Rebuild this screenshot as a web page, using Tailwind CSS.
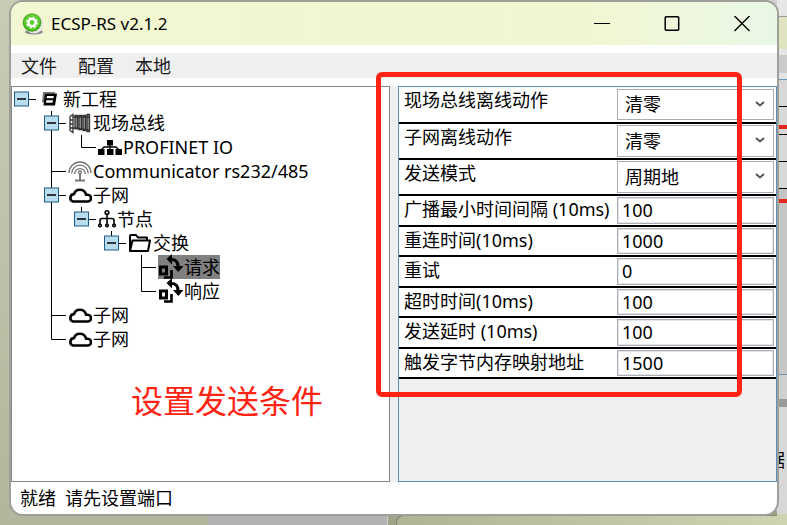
<!DOCTYPE html>
<html lang="zh-CN">
<head>
    <meta charset="utf-8">
    <meta name="viewport" content="width=device-width, initial-scale=1">
    <title>ECSP-RS v2.1.2</title>
    <script src="https://cdn.jsdelivr.net/npm/@tailwindcss/browser@4"></script>
</head>
<body class="font-['Noto_Sans','Noto_Sans_CJK_SC',sans-serif] text-black">

<!-- Shared symbols -->
<svg class="hidden" xmlns="http://www.w3.org/2000/svg">
    <symbol id="minus" viewBox="0 0 24 24">
        <path d="M15 12.500h7" stroke="#000"/>
        <rect x=".5" y="5" width="14" height="14" fill="#b9dcee" stroke="#1f5a86"/>
        <path d="M3 12h9" stroke="#000" stroke-width="1.3"/>
    </symbol>
    <symbol id="pipe" viewBox="0 0 30 24"><path d="M7.500 0v24" stroke="#000"/></symbol>
    <symbol id="tee" viewBox="0 0 24 24"><path d="M7.500 0v24M7.500 12.500H22" fill="none" stroke="#000"/></symbol>
    <symbol id="elbow" viewBox="0 0 24 24"><path d="M7.500 0v12.500H22" fill="none" stroke="#000"/></symbol>
    <symbol id="cloud" viewBox="0 0 24 24">
        <path d="M5 18.500h14.500a3.400 3.400 0 0 0 .3-6.800h-1.800a6.200 6.200 0 0 0-12-.6A3.800 3.800 0 0 0 5 18.500z" fill="none" stroke="#000" stroke-width="2.600" stroke-linejoin="round"/>
    </symbol>
    <symbol id="exchange" viewBox="0 0 26 24" class="overflow-visible">
        <rect x="2.500" y="12" width="6" height="7" fill="none" stroke="#000" stroke-width="3"/>
        <path d="M6 22.500h7.500v-7.500" fill="none" stroke="#000" stroke-width="2.600"/>
        <path d="M13 4.500c5 0 7 2 7 7" fill="none" stroke="#000" stroke-width="3.200"/>
        <path d="M8.500 4l5.500-5v10.500zM15 11h10.500l-5.200 6z"/>
    </symbol>
</svg>

<div class="relative flex h-screen min-h-[500px] overflow-hidden bg-linear-to-r from-[#cfd2b9] to-[#d2d2d2] pt-[2px] pr-[10px] pb-[11px] pl-[11px]">

    <!-- Windows behind -->
    <div class="absolute inset-y-0 left-0 w-[208px] bg-linear-to-b from-[#c9ccb4] to-[#b3b69d]"></div>
    <div class="absolute inset-y-0 right-[400px] left-[208px] bg-[#b2b2b2]"></div>
    <div class="absolute inset-x-[208px] top-0 h-[2px] bg-[#b2b2b2]"></div>
    <div class="absolute right-0 bottom-0 left-[388px] h-[14px] bg-[#a1a488]"></div>
    <div class="absolute right-0 bottom-0 left-[396px] h-[10px] rounded-tl-lg border-t border-l border-[#85876f] bg-linear-to-r from-[#b0b496] to-[#cfd3b1]"></div>
    <div class="absolute inset-y-0 right-0 flex w-[10px] flex-col bg-[#cacaca]">
        <div class="h-4 bg-[#e6e6e6]"></div>
        <div class="h-[33px] border-t border-[#999] bg-[#dfe3c0]"></div>
        <div class="h-[6px] bg-[#e5e5e5]"></div>
        <div class="h-[18px] bg-[#cbcbcb]"></div>
        <div class="h-[7px] border-b border-[#6797b8] bg-[#e5e5e5]"></div>
        <div class="h-[27px] border-b border-black bg-[#d8d8d8]"></div>
        <div class="h-[18px] bg-[#d8d8d8]"></div>
        <div class="h-1 bg-[#e2261c]"></div>
        <div class="h-[6px] border-b border-black bg-[#d8d8d8]"></div>
        <div class="h-[27px] border-b border-black bg-[#d8d8d8]"></div>
        <div class="h-[27px] border-b border-black bg-[#d8d8d8]"></div>
        <div class="h-[10px] bg-[#c4c4c4]"></div>
        <div class="h-1 bg-[#e2261c]"></div>
        <div class="h-[172px] border-b border-[#7894a8] bg-[#c6c6c6]"></div>
        <div class="h-[24px] bg-[#d0d0d0]"></div>
        <div class="h-[8px] bg-[#9a9a9a]"></div>
        <div class="h-[107px] bg-[#d8d8d8]"></div>
        <div class="grow bg-[#cfd3b1]"></div>
    </div>
    <span class="absolute top-[448px] right-[2px] text-lg leading-6">据</span>

    <!-- Window -->
    <main class="relative flex min-w-0 grow flex-col overflow-hidden rounded-xl bg-white shadow-[0_0_0_2px_#a0a09a]">
        <!-- Title bar -->
        <header class="flex h-[43px] shrink-0 items-center bg-linear-to-r from-[#f2f7d2] from-75% to-[#e9f7e6]">
            <svg class="ml-[10px] size-6" viewBox="0 0 24 24">
                <ellipse cx="13" cy="20" rx="9" ry="2.500" fill="#8a8a8a"/>
                <circle cx="13" cy="12" r="9.500" fill="#e4e8e0"/>
                <circle cx="11" cy="10.500" r="9.300" fill="#3fa61c"/>
                <circle cx="11" cy="10" r="8" fill="#62cc35"/>
                <circle cx="11" cy="10.500" r="3.600" fill="none" stroke="#fff" stroke-width="2.400"/>
                <circle cx="11" cy="10.500" r="5" fill="none" stroke="#fff" stroke-width="1.600" stroke-dasharray="2 1.930"/>
            </svg>
            <h1 class="ml-[6px] text-[17px] leading-6">ECSP-RS v2.1.2</h1>
            <div class="ml-auto flex items-center gap-[46px] pr-[23px]">
                <button type="button" aria-label="最小化" class="p-1"><svg class="size-4" viewBox="0 0 16 16" stroke="#000"><path d="M0 7.500h16"/></svg></button>
                <button type="button" aria-label="最大化" class="p-1"><svg class="size-4" viewBox="0 0 16 16" fill="none" stroke="#000" stroke-width="1.500"><rect x="1.200" y=".8" width="13.500" height="13.500" rx="1"/></svg></button>
                <button type="button" aria-label="关闭" class="p-1"><svg class="size-4" viewBox="0 0 16 16" stroke="#000" stroke-width="1.400"><path d="M.5 0l15 15M15.500 0l-15 15"/></svg></button>
            </div>
        </header>

        <!-- Menu -->
        <nav class="mt-2 flex h-[25px] shrink-0 items-center gap-[21px] bg-[#efefef] pl-[10px] text-lg text-[#1a1a1a]">
            <button type="button">文件</button>
            <button type="button">配置</button>
            <button type="button">本地</button>
        </nav>

        <div class="mt-2 flex min-h-0 grow bg-[#efefef]">
            <!-- Project tree -->
            <section class="flex min-w-0 flex-1 flex-col border border-[#828790] bg-white text-lg leading-6 whitespace-nowrap">
                <ul role="tree" aria-label="新工程" class="pl-[2px]">
                    <li role="treeitem" class="flex h-6 items-center">
                        <button type="button" aria-label="折叠"><svg class="size-6"><use href="#minus"/></svg></button>
                        <svg class="mr-px size-6" viewBox="0 0 24 24">
                            <path d="M5 5h12v1.500H7v9H4z" fill="#777"/>
                            <path d="M7 6.500h12l-2 12H5.500zM9 9l-.4 2.200h6.800l.4-2.200zM8.300 13.200L8 15.800h6.600l.4-2.600z" fill-rule="evenodd"/>
                        </svg>
                        新工程
                    </li>
                    <li role="treeitem" class="flex h-6 items-center pl-[30px]">
                        <button type="button" aria-label="折叠" class="relative"><svg class="absolute h-6 w-[30px]"><use href="#pipe"/></svg><svg class="relative size-6"><use href="#minus"/></svg></button>
                        <svg class="mr-px size-6" viewBox="0 0 24 24" fill="none" stroke="#333" stroke-width="1.300">
                            <path d="M2 5.500l3-2v18l-3-2zM2 9h3M2 13h3M2 17h3"/>
                            <path d="M7 4.500h2.500v13H7zM11 4.500h2.500v14H11zM15 4.500h2.500v15H15zM19 3.500h2.500v17H19z" fill="#999"/>
                            <path d="M5 6h16M5 17l16 2"/>
                        </svg>
                        现场总线
                    </li>
                    <li role="treeitem" class="flex h-6 items-center pl-[30px]">
                        <svg class="h-6 w-[30px]"><use href="#pipe"/></svg>
                        <svg class="size-6"><use href="#elbow"/></svg>
                        <svg class="mr-px size-6" viewBox="0 0 24 24">
                            <path d="M9 5h6v5.500H9zM0 14h6.500v6H0zM9 14h6.500v6H9zM17.500 14H24v6h-6.500z"/>
                            <path d="M12 9v6M3 15l3-3h12l3 3" fill="none" stroke="#000" stroke-width="1.300"/>
                        </svg>
                        PROFINET IO
                    </li>
                    <li role="treeitem" class="flex h-6 items-center pl-[30px]">
                        <svg class="size-6"><use href="#tee"/></svg>
                        <svg class="mr-px size-6" viewBox="0 0 24 24" fill="none" stroke="#777" stroke-width="1.300">
                            <path d="M1 14a11 11 0 0 1 22 0M3.700 14.500a8.200 8.200 0 0 1 16.600 0M6.700 15a5.200 5.200 0 0 1 10.600 0"/>
                            <circle cx="12" cy="13.500" r="1.500"/>
                            <path d="M12 14v7M7 21.500h10" stroke-width="1.800"/>
                        </svg>
                        Communicator rs232/485
                    </li>
                    <li role="treeitem" class="flex h-6 items-center pl-[30px]">
                        <button type="button" aria-label="折叠" class="relative"><svg class="absolute h-6 w-[30px]"><use href="#pipe"/></svg><svg class="relative size-6"><use href="#minus"/></svg></button>
                        <svg class="mr-px size-6"><use href="#cloud"/></svg>
                        子网
                    </li>
                    <li role="treeitem" class="flex h-6 items-center pl-[30px]">
                        <svg class="h-6 w-[30px]"><use href="#pipe"/></svg>
                        <button type="button" aria-label="折叠" class="relative"><svg class="absolute h-3 w-6"><use href="#elbow" height="24"/></svg><svg class="relative size-6"><use href="#minus"/></svg></button>
                        <svg class="mr-px h-6 w-[18px]" viewBox="0 0 18 24" fill="none" stroke="#000" stroke-width="1.600">
                            <circle cx="9" cy="5.500" r="1.800"/>
                            <path d="M9 7.500V17M2 17v-3.500q0-2 2-2h10q2 0 2 2V17"/>
                            <circle cx="2" cy="18.500" r="1.300"/><circle cx="9" cy="18.500" r="1.300"/><circle cx="16" cy="18.500" r="1.300"/>
                        </svg>
                        节点
                    </li>
                    <li role="treeitem" class="flex h-6 items-center pl-[30px]">
                        <svg class="h-6 w-[30px]"><use href="#pipe"/></svg>
                        <span class="w-[30px]"></span>
                        <button type="button" aria-label="折叠" class="relative"><svg class="absolute h-3 w-6"><use href="#elbow" height="24"/></svg><svg class="relative size-6"><use href="#minus"/></svg></button>
                        <svg class="mr-px size-6" viewBox="0 0 24 24" fill="none" stroke="#000" stroke-width="2" stroke-linejoin="round">
                            <path d="M2 20V5q0-1 1-1h5l2 2.500h9v3M2 20l2.500-10.500h17.500L20 20z"/>
                        </svg>
                        交换
                    </li>
                    <li role="treeitem" aria-selected="true" class="flex h-6 items-center pl-[30px]">
                        <svg class="h-6 w-[90px]" viewBox="0 0 90 24"><path d="M7.500 0v24" stroke="#000"/></svg>
                        <svg class="size-6"><use href="#tee"/></svg>
                        <span class="flex h-6 items-center bg-[#808080]"><svg class="h-6 w-[26px] overflow-visible"><use href="#exchange"/></svg>请求</span>
                    </li>
                    <li role="treeitem" class="flex h-6 items-center pl-[30px]">
                        <svg class="h-6 w-[90px]" viewBox="0 0 90 24"><path d="M7.500 0v24" stroke="#000"/></svg>
                        <svg class="size-6"><use href="#elbow"/></svg>
                        <svg class="h-6 w-[26px] overflow-visible"><use href="#exchange"/></svg>响应
                    </li>
                    <li role="treeitem" class="flex h-6 items-center pl-[30px]">
                        <svg class="size-6"><use href="#tee"/></svg>
                        <svg class="mr-px size-6"><use href="#cloud"/></svg>
                        子网
                    </li>
                    <li role="treeitem" class="flex h-6 items-center pl-[30px]">
                        <svg class="size-6"><use href="#elbow"/></svg>
                        <svg class="mr-px size-6"><use href="#cloud"/></svg>
                        子网
                    </li>
                </ul>
                <p class="mt-[30px] ml-[119px] text-[32px] leading-[40px] text-[#ff2313]">设置发送条件</p>
            </section>

            <!-- Parameters -->
            <form class="ml-2 min-w-0 flex-1 border border-[#5e8db8] text-lg leading-[27px] whitespace-nowrap">
                <div class="bg-white">
                    <div class="flex h-[37px] border-b-2 border-black pr-[2px]">
                        <label for="bus-offline" class="w-[218px] shrink-0 pl-[5px]">现场总线离线动作</label>
                        <div class="relative my-[2px] min-w-0 grow">
                            <select id="bus-offline" class="size-full appearance-none border border-[#abadb3] bg-white pl-[7px]"><option>清零</option><option>保持</option></select>
                            <svg class="pointer-events-none absolute top-[10px] right-[9px] size-[10px]" viewBox="0 0 10 10" fill="none" stroke="#555" stroke-width="2"><path d="M1 3l4 3.500L9 3"/></svg>
                        </div>
                    </div>
                    <div class="flex h-9 border-b-2 border-black pr-[2px]">
                        <label for="subnet-offline" class="w-[218px] shrink-0 pl-[5px]">子网离线动作</label>
                        <div class="relative my-px min-w-0 grow">
                            <select id="subnet-offline" class="size-full appearance-none border border-[#abadb3] bg-white pl-[7px]"><option>清零</option><option>保持</option></select>
                            <svg class="pointer-events-none absolute top-[10px] right-[9px] size-[10px]" viewBox="0 0 10 10" fill="none" stroke="#555" stroke-width="2"><path d="M1 3l4 3.500L9 3"/></svg>
                        </div>
                    </div>
                    <div class="flex h-9 border-b-2 border-black pr-[2px]">
                        <label for="send-mode" class="w-[218px] shrink-0 pl-[5px]">发送模式</label>
                        <div class="relative my-px min-w-0 grow">
                            <select id="send-mode" class="size-full appearance-none border border-[#abadb3] bg-white pl-[7px]"><option>周期地</option><option>触发</option></select>
                            <svg class="pointer-events-none absolute top-[10px] right-[9px] size-[10px]" viewBox="0 0 10 10" fill="none" stroke="#555" stroke-width="2"><path d="M1 3l4 3.500L9 3"/></svg>
                        </div>
                    </div>
                    <div class="flex h-[31px] border-b-2 border-black pr-[2px]">
                        <label for="broadcast-gap" class="w-[218px] shrink-0 pl-[5px]">广播最小时间间隔 (10ms)</label>
                        <input id="broadcast-gap" type="text" value="100" class="my-px min-w-0 grow border border-[#abadb3] px-1 inset-ring inset-ring-[#e3e3ea]">
                    </div>
                    <div class="flex h-[30px] border-b-2 border-black pr-[2px]">
                        <label for="reconnect-time" class="w-[218px] shrink-0 pl-[5px]">重连时间(10ms)</label>
                        <input id="reconnect-time" type="text" value="1000" class="my-px min-w-0 grow border border-[#abadb3] px-1 inset-ring inset-ring-[#e3e3ea]">
                    </div>
                    <div class="flex h-[31px] border-b-2 border-black pr-[2px]">
                        <label for="retries" class="w-[218px] shrink-0 pl-[5px]">重试</label>
                        <input id="retries" type="text" value="0" class="my-px min-w-0 grow border border-[#abadb3] px-1 inset-ring inset-ring-[#e3e3ea]">
                    </div>
                    <div class="flex h-[30px] border-b-2 border-black pr-[2px]">
                        <label for="timeout" class="w-[218px] shrink-0 pl-[5px]">超时时间(10ms)</label>
                        <input id="timeout" type="text" value="100" class="my-px min-w-0 grow border border-[#abadb3] px-1 inset-ring inset-ring-[#e3e3ea]">
                    </div>
                    <div class="flex h-[31px] border-b-2 border-black pr-[2px]">
                        <label for="send-delay" class="w-[218px] shrink-0 pl-[5px]">发送延时 (10ms)</label>
                        <input id="send-delay" type="text" value="100" class="my-px min-w-0 grow border border-[#abadb3] px-1 inset-ring inset-ring-[#e3e3ea]">
                    </div>
                    <div class="flex h-[30px] border-b-2 border-black pr-[2px]">
                        <label for="trigger-address" class="w-[218px] shrink-0 pl-[5px]">触发字节内存映射地址</label>
                        <input id="trigger-address" type="text" value="1500" class="my-px min-w-0 grow border border-[#abadb3] px-1 inset-ring inset-ring-[#e3e3ea]">
                    </div>
                </div>
            </form>
        </div>

        <!-- Status bar -->
        <footer class="flex h-8 shrink-0 items-center gap-[9px] pl-[9px] text-lg"><span>就绪</span><span>请先设置端口</span></footer>
    </main>

    <!-- Highlight box -->
    <div class="pointer-events-none absolute top-[72px] right-[45px] h-[325px] w-[366px] rounded-md border-5 border-[#ff2313]"></div>
</div>
</body>
</html>
